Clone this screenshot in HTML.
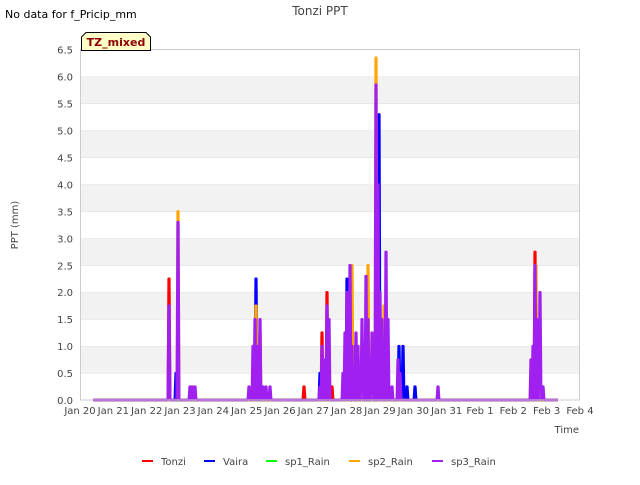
<!DOCTYPE html>
<html><head><meta charset="utf-8"><style>
body{margin:0;background:#fff;}
svg text{font-family:"DejaVu Sans","Liberation Sans",sans-serif;fill:#444;}
</style></head><body>
<svg id="s" width="640" height="480" xmlns="http://www.w3.org/2000/svg">
<rect width="640" height="480" fill="#fff"/>
<g id="bands"></g>
<g id="series"></g>
<rect x="80.5" y="49.5" width="499" height="350.5" fill="none" stroke="#ccc" stroke-width="1"/>
<text x="5" y="18" font-size="11" style="fill:#000">No data for f_Pricip_mm</text>
<text x="320" y="15" font-size="12" text-anchor="middle">Tonzi PPT</text>
<path d="M81.5,50.5 L81.5,37 L86,32.5 L146,32.5 L150.5,37 L150.5,50.5 Z" fill="#ffffc8" stroke="#000" stroke-width="1"/>
<text x="116" y="46" font-size="11" font-weight="bold" text-anchor="middle" style="fill:#8b0000">TZ_mixed</text>
<text transform="translate(18,225) rotate(-90)" font-size="10" text-anchor="middle">PPT (mm)</text>
<text x="579" y="433" font-size="10" text-anchor="end">Time</text>
<g id="yt" font-size="10" text-anchor="end"></g>
<g id="xt" font-size="10" text-anchor="middle"></g>
<g font-size="10">
<line x1="142" y1="461" x2="153" y2="461" stroke="#f00" stroke-width="2"/><text x="161" y="465">Tonzi</text>
<line x1="204" y1="461" x2="215" y2="461" stroke="#00f" stroke-width="2"/><text x="223" y="465">Vaira</text>
<line x1="266" y1="461" x2="277" y2="461" stroke="#0f0" stroke-width="2"/><text x="285" y="465">sp1_Rain</text>
<line x1="349" y1="461" x2="360" y2="461" stroke="#ffa500" stroke-width="2"/><text x="368" y="465">sp2_Rain</text>
<line x1="432" y1="461" x2="443" y2="461" stroke="#a020f0" stroke-width="2"/><text x="451" y="465">sp3_Rain</text>
</g>
</svg>
<script>
var NS="http://www.w3.org/2000/svg";
function Y(v){return 400-v*53.9;}
var b=document.getElementById('bands'),yt=document.getElementById('yt'),xt=document.getElementById('xt');
for(var i=0;i<13;i++){var y0=Y((i+1)*0.5),y1=Y(i*0.5);
 var r=document.createElementNS(NS,'rect');r.setAttribute('x',81);r.setAttribute('width',498);r.setAttribute('y',y0);r.setAttribute('height',y1-y0);
 r.setAttribute('fill',i%2?'#f2f2f2':'#fff');b.appendChild(r);
 var l=document.createElementNS(NS,'line');l.setAttribute('x1',81);l.setAttribute('x2',579);l.setAttribute('y1',y0);l.setAttribute('y2',y0);l.setAttribute('stroke','#ddd');b.appendChild(l);}
for(var i=0;i<=13;i++){var t=document.createElementNS(NS,'text');t.setAttribute('x',73);t.setAttribute('y',Y(i*0.5)+4);t.textContent=(i*0.5).toFixed(1);yt.appendChild(t);}
var lab=['Jan 20','Jan 21','Jan 22','Jan 23','Jan 24','Jan 25','Jan 26','Jan 27','Jan 28','Jan 29','Jan 30','Jan 31','Feb 1','Feb 2','Feb 3','Feb 4'];
for(var i=0;i<16;i++){var t=document.createElementNS(NS,'text');t.setAttribute('x',80+i*33.33);t.setAttribute('y',414);t.textContent=lab[i];xt.appendChild(t);}
var S=[
['#f00',[[169,2.25],[304,0.25],[322,1.25],[327,2.0],[332,0.25],[535,2.75]]],
['#00f',[[176,0.5],[256,2.25],[320,0.5],[347,2.25],[353,1.0],[379,5.3],[399,1.0],[403,1.0],[407,0.25],[415,0.25],[537,0.75]]],
['#0f0',[]],
['#ffa500',[[178,3.5],[194,0.25],[256,1.75],[260,1.25],[352,2.5],[368,2.5],[376,6.35],[384,1.75],[536,2.5]]],
['#a020f0',[[169,1.75],[178,3.3],[190,0.25],[192,0.25],[195,0.25],[249,0.25],[253,1.0],[255,1.5],[258,1.0],[260,1.5],[263,0.25],[266,0.25],[270,0.25],[320,0.25],[322,1.0],[325,0.75],[327,1.75],[329,1.5],[343,0.5],[345,1.25],[347,2.0],[350,2.5],[352,1.0],[356,1.25],[358,1.0],[362,1.5],[366,2.3],[368,1.5],[372,1.25],[376,5.85],[378,4.0],[380,2.0],[382,1.5],[386,2.75],[388,1.5],[392,0.25],[398,0.75],[400,0.5],[438,0.25],[531,0.75],[533,1.0],[535,2.5],[537,1.5],[540,2.0],[543,0.25]]]
];
var g=document.getElementById('series');
S.forEach(function(s){var d='M93,400';s[1].forEach(function(p){d+=' L'+(p[0]-1.3)+',400 L'+(p[0]-0.4)+','+Y(p[1])+' L'+(p[0]+0.4)+','+Y(p[1])+' L'+(p[0]+1.3)+',400';});d+=' L558,400';
 var pa=document.createElementNS(NS,'path');pa.setAttribute('d',d);pa.setAttribute('fill','none');pa.setAttribute('stroke',s[0]);pa.setAttribute('stroke-width',2.4);pa.setAttribute('stroke-linejoin','round');g.appendChild(pa);});
</script>
</body></html>
